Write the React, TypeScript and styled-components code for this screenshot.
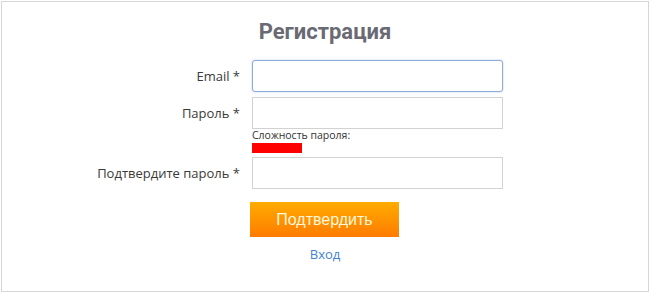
import styled, { createGlobalStyle } from "styled-components"

const Global = createGlobalStyle`
  body {
    margin: 0;
    background: #ffffff;
    font-family: "Open Sans", "DejaVu Sans", sans-serif;
  }
`

const Frame = styled.div`
  box-sizing: border-box;
  width: 648px;
  height: 291px;
  margin: 1px 0 0 1px;
  border: 1px solid #d6d6d6;
  display: flex;
  flex-direction: column;
  align-items: stretch;
`

const Title = styled.h1`
  margin: 15px 0 0;
  text-align: center;
  font-family: Roboto, "Open Sans", sans-serif;
  font-size: 22px;
  font-weight: 700;
  color: #6a6a74;
  line-height: 30px;
`

const Form = styled.form`
  display: grid;
  grid-template-columns: 232px 251px;
  column-gap: 12px;
  padding-left: 6px;
  margin-top: 13px;
`

const Label = styled.label`
  text-align: right;
  font-size: 13px;
  color: #3a3a3a;
  display: flex;
  align-items: center;
  justify-content: flex-end;
  height: 32px;
`

const Field = styled.div<{ $gap?: number }>`
  display: flex;
  flex-direction: column;
  margin-bottom: ${p => p.$gap ?? 5}px;
`

const Input = styled.input<{ $focus?: boolean }>`
  box-sizing: border-box;
  width: 251px;
  height: 32px;
  border: 1px solid ${p => (p.$focus ? "#8fabd9" : "#d2d2d2")};
  border-radius: ${p => (p.$focus ? "3px" : "0")};
  box-shadow: ${p => (p.$focus ? "0 0 2px rgba(120,150,210,0.5)" : "none")};
  outline: none;
  padding: 0 6px;
  font-size: 13px;
`

const Strength = styled.div`
  font-size: 10.5px;
  color: #333;
  line-height: 13px;
`

const Bar = styled.div`
  width: 50px;
  height: 10px;
  background: #ff0000;
  margin-top: 1px;
`

const Button = styled.button`
  box-sizing: border-box;
  width: 149px;
  height: 35px;
  margin-left: -2px;
  margin-top: 8px;
  border: none;
  background: linear-gradient(#ffac00, #ff7b00);
  color: #fff8dc;
  font-family: "Liberation Sans", Arial, sans-serif;
  font-size: 16px;
  cursor: pointer;
`

const LinkRow = styled.div`
  text-align: center;
  margin-top: 5px;
`

const Link = styled.a`
  color: #3f83d6;
  font-size: 13px;
  text-decoration: none;
`

export default function App() {
  return (
    <>
      <Global />
      <Frame>
        <Title>Регистрация</Title>
        <Form>
          <Label>Email *</Label>
          <Field>
            <Input type="email" $focus />
          </Field>
          <Label>Пароль *</Label>
          <Field $gap={4}>
            <Input type="password" />
            <Strength>Сложность пароля:</Strength>
            <Bar />
          </Field>
          <Label>Подтвердите пароль *</Label>
          <Field>
            <Input type="password" />
          </Field>
          <div />
          <div>
            <Button type="button">Подтвердить</Button>
          </div>
        </Form>
        <LinkRow>
          <Link href="#">Вход</Link>
        </LinkRow>
      </Frame>
    </>
  )
}
